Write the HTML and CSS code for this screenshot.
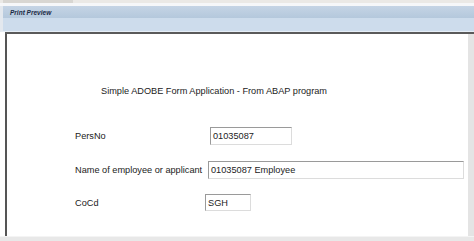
FILE: index.html
```html
<!DOCTYPE html>
<html>
<head>
<meta charset="utf-8">
<link rel="stylesheet" href="styles.css">
</head>
<body>
<div class="screen">
  <div class="topstrip"><div class="tab"></div></div>
  <div class="gap"></div>
  <div class="titlebar"><span class="title">Print Preview</span></div>
  <div class="toolbar"></div>
  <div class="frame">
    <div class="page">
      <div class="heading">Simple ADOBE Form Application - From ABAP program</div>
      <div class="row r1">
        <span class="label">PersNo</span>
        <span class="field f1">01035087</span>
      </div>
      <div class="row r2">
        <span class="label">Name of employee or applicant</span>
        <span class="field f2">01035087 Employee</span>
      </div>
      <div class="row r3">
        <span class="label">CoCd</span>
        <span class="field f3">SGH</span>
      </div>
    </div>
    <div class="rightstrip"></div>
  </div>
  <div class="bottomstrip"></div>
</div>
</body>
</html>
```
FILE: styles.css
```css
html, body {
  margin: 0;
  padding: 0;
  background: #ffffff;
}
.screen {
  width: 474px;
  height: 241px;
  display: flex;
  flex-direction: column;
  overflow: hidden;
  font-family: "Liberation Sans", Arial, sans-serif;
}
.topstrip {
  height: 3px;
  background: #ebe9e6;
  display: flex;
}
.tab {
  width: 70px;
  margin-left: 3px;
  background: #d8d6d2;
}
.gap {
  height: 3px;
  background: #f6f7f9;
}
.titlebar {
  height: 12px;
  background: linear-gradient(#c5d4e5, #b4c8dc);
  display: flex;
  align-items: center;
  padding-left: 7px;
  border-left: 3px solid #e3e8ee;
}
.title {
  font-size: 6.5px;
  font-weight: bold;
  font-style: italic;
  color: #1b2a44;
}
.toolbar {
  height: 13px;
  background: #cddcec;
  border-left: 3px solid #e3e8ee;
  border-bottom: 1px solid #e6eef6;
}
.frame {
  flex: 1;
  display: flex;
  border-top: 2px solid #5a5a5a;
  margin-left: 5px;
}
.page {
  flex: 1;
  background: #ffffff;
  border-left: 2px solid #555555;
  font-size: 9.2px;
  color: #222222;
}
.rightstrip {
  width: 6px;
  background: #e4e4e4;
}
.bottomstrip {
  height: 4px;
  background: #e8e8e8;
  border-top: 1px solid #f4f4f4;
}
.heading {
  margin-top: 51px;
  margin-left: 94px;
  line-height: 12px;
}
.row {
  display: flex;
  align-items: center;
  margin-left: 68px;
}
.label {
  width: 0;
  white-space: nowrap;
}
.field {
  box-sizing: border-box;
  height: 18px;
  display: flex;
  align-items: center;
  padding-left: 2px;
  border-top: 1px solid #9a9a9a;
  border-left: 1px solid #9a9a9a;
  border-right: 1px solid #dcdcdc;
  border-bottom: 1px solid #dcdcdc;
  background: #fff;
}
.r1 { margin-top: 30px; }
.r2 { margin-top: 16px; }
.r3 { margin-top: 15px; }
.f1 { margin-left: 135px; width: 82px; }
.f2 { margin-left: 133px; width: 256px; }
.f3 { margin-left: 130px; width: 46px; height: 17px; }
```
